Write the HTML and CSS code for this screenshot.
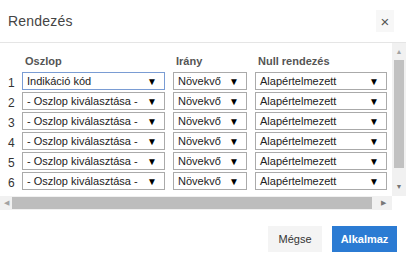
FILE: index.html
```html
<!DOCTYPE html>
<html lang="hu">
<head>
    <meta charset="UTF-8">
    <title>Rendezés</title>
    <link rel="stylesheet" href="styles.css">
</head>
<body>
    <div class="modal">
        <div class="modal-header">
            <span class="modal-title">Rendezés</span>
            <span class="close">×</span>
        </div>

        <div class="modal-body">
            <div class="viewport">
                <div class="sort-grid">
                    <span></span>
                    <span class="col-head">Oszlop</span>
                    <span class="col-head">Irány</span>
                    <span class="col-head">Null rendezés</span>

                    <span class="num">1</span>
                    <div class="sel focus"><span>Indikáció kód</span><b>▼</b></div>
                    <div class="sel"><span>Növekvő</span><b>▼</b></div>
                    <div class="sel"><span>Alapértelmezett</span><b>▼</b></div>

                    <span class="num">2</span>
                    <div class="sel"><span>- Oszlop kiválasztása -</span><b>▼</b></div>
                    <div class="sel"><span>Növekvő</span><b>▼</b></div>
                    <div class="sel"><span>Alapértelmezett</span><b>▼</b></div>

                    <span class="num">3</span>
                    <div class="sel"><span>- Oszlop kiválasztása -</span><b>▼</b></div>
                    <div class="sel"><span>Növekvő</span><b>▼</b></div>
                    <div class="sel"><span>Alapértelmezett</span><b>▼</b></div>

                    <span class="num">4</span>
                    <div class="sel"><span>- Oszlop kiválasztása -</span><b>▼</b></div>
                    <div class="sel"><span>Növekvő</span><b>▼</b></div>
                    <div class="sel"><span>Alapértelmezett</span><b>▼</b></div>

                    <span class="num">5</span>
                    <div class="sel"><span>- Oszlop kiválasztása -</span><b>▼</b></div>
                    <div class="sel"><span>Növekvő</span><b>▼</b></div>
                    <div class="sel"><span>Alapértelmezett</span><b>▼</b></div>

                    <span class="num">6</span>
                    <div class="sel"><span>- Oszlop kiválasztása -</span><b>▼</b></div>
                    <div class="sel"><span>Növekvő</span><b>▼</b></div>
                    <div class="sel"><span>Alapértelmezett</span><b>▼</b></div>
                </div>
            </div>

            <div class="vscroll">
                <span class="arrow">▲</span>
                <div class="vthumb-track"><div class="vthumb"></div></div>
                <span class="arrow">▼</span>
            </div>

            <div class="hscroll">
                <span class="arrow">◀</span>
                <div class="hthumb"></div>
                <span class="arrow">▶</span>
            </div>
            <div class="corner"></div>
        </div>

        <div class="modal-footer">
            <button class="btn btn-default">Mégse</button>
            <button class="btn btn-primary">Alkalmaz</button>
        </div>
    </div>
</body>
</html>
```

FILE: styles.css
```css
body {
    margin: 0;
    font-family: "Liberation Sans", Arial, sans-serif;
    background: #fff;
    color: #333;
}
.modal {
    width: 406px;
    height: 257px;
    display: flex;
    flex-direction: column;
}
.modal-header {
    height: 42px;
    border-bottom: 1px solid #e5e5e5;
    display: flex;
    align-items: center;
    justify-content: space-between;
    padding: 0 12px 0 8px;
}
.modal-title {
    font-size: 14px;
    color: #444;
    letter-spacing: 0.2px;
}
.close {
    width: 18px;
    height: 22px;
    background: #f7f7f7;
    color: #555;
    font-size: 15px;
    display: flex;
    align-items: center;
    justify-content: center;
}
.modal-body {
    display: grid;
    grid-template-columns: 1fr 14px;
    grid-template-rows: 153px 14px;
    height: 168px;
}
.viewport {
    overflow: hidden;
    padding: 12px 0 0 0;
}
.sort-grid {
    display: grid;
    grid-template-columns: 14px 143px 74px 132px;
    column-gap: 8px;
    row-gap: 2px;
    width: 400px;
    align-items: center;
}
.col-head {
    font-size: 11px;
    font-weight: bold;
    color: #555;
    padding-left: 3px;
    margin-bottom: 3px;
}
.num {
    font-size: 12px;
    color: #333;
    padding-left: 8px;
    padding-top: 3px;
}
.sel {
    height: 18px;
    box-sizing: border-box;
    border: 1px solid #aaa;
    background: #fff;
    display: flex;
    align-items: center;
    justify-content: space-between;
    padding: 0 7px 0 4px;
    font-size: 11px;
    color: #222;
    white-space: nowrap;
}
.sel b {
    font-size: 10px;
    color: #000;
}
.sel.focus {
    border-color: #7a9cd3;
}
.vscroll {
    background: #f1f1f1;
    display: flex;
    flex-direction: column;
    align-items: center;
}
.arrow {
    font-size: 7px;
    color: #a3a3a3;
    height: 13px;
    display: flex;
    align-items: center;
    justify-content: center;
    width: 12px;
}
.vscroll .arrow:first-child {
    margin-top: 2px;
}
.vscroll .arrow:last-child {
    margin-top: auto;
    margin-bottom: 3px;
    color: #777;
}
.vthumb-track {
    width: 100%;
    flex: 1;
    padding: 0 2px;
    box-sizing: border-box;
}
.vthumb {
    height: 108px;
    margin-top: 2px;
    background: #c1c1c1;
}
.hscroll {
    background: #f1f1f1;
    display: flex;
    align-items: center;
}
.hscroll .arrow:last-child {
    margin-left: auto;
    margin-right: 3px;
    color: #777;
}
.hthumb {
    width: 360px;
    height: 12px;
    background: #bdbdbd;
}
.corner {
    background: #fff;
}
.modal-footer {
    flex: 1;
    display: flex;
    justify-content: flex-end;
    align-items: flex-end;
    gap: 10px;
    padding: 0 9px 5px 0;
}
.btn {
    height: 26px;
    border: none;
    font-family: "Liberation Sans", Arial, sans-serif;
    font-size: 11px;
    padding: 0;
}
.btn-default {
    width: 54px;
    background: #f4f4f4;
    color: #333;
}
.btn-primary {
    width: 65px;
    background: #2b7bd3;
    color: #fff;
    font-weight: bold;
}
```
